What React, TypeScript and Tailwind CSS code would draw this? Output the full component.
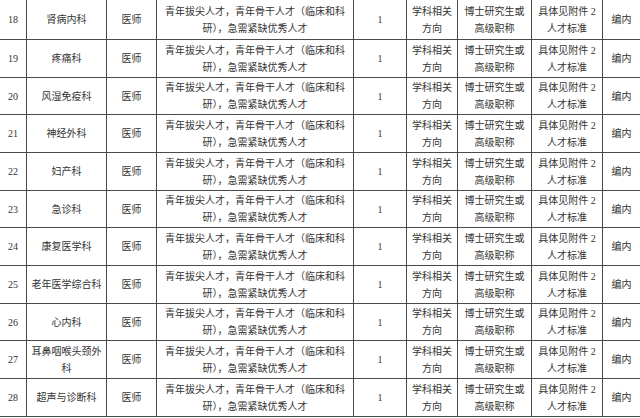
// Recruitment table fragment: rows 18–28, doctor posts per department.

const ROWS: { no: string; dept: React.ReactNode }[] = [
  { no: "18", dept: "肾病内科" },
  { no: "19", dept: "疼痛科" },
  { no: "20", dept: "风湿免疫科" },
  { no: "21", dept: "神经外科" },
  { no: "22", dept: "妇产科" },
  { no: "23", dept: "急诊科" },
  { no: "24", dept: "康复医学科" },
  { no: "25", dept: "老年医学综合科" },
  { no: "26", dept: "心内科" },
  {
    no: "27",
    dept: (
      <>
        耳鼻咽喉头颈外
        <br />科
      </>
    ),
  },
  { no: "28", dept: "超声与诊断科" },
];

// row heights include the 1px bottom rule
const HEIGHTS = [
  "h-[40px]",
  "h-[38px]",
  "h-[37px]",
  "h-[38px]",
  "h-[38px]",
  "h-[37px]",
  "h-[38px]",
  "h-[38px]",
  "h-[37px]",
  "h-[38px]",
  "h-[38px]",
];

const cell =
  "flex shrink-0 items-center justify-center text-center border-r border-[#4a4a4a]";

function Row({ no, dept, h }: { no: string; dept: React.ReactNode; h: string }) {
  return (
    <div className={`flex ${h} border-b border-[#4a4a4a]`}>
      <div className={`${cell} w-[27px]`}>{no}</div>
      <div className={`${cell} w-[80px]`}>{dept}</div>
      <div className={`${cell} w-[50px]`}>医师</div>
      <div className={`${cell} w-[197px]`}>
        <span>
          青年拔尖人才，青年骨干人才（临床和科
          <br />
          研），急需紧缺优秀人才
        </span>
      </div>
      <div className={`${cell} w-[53px]`}>1</div>
      <div className={`${cell} w-[51px]`}>
        <span>
          学科相关
          <br />
          方向
        </span>
      </div>
      <div className={`${cell} w-[74px]`}>
        <span>
          博士研究生或
          <br />
          高级职称
        </span>
      </div>
      <div className={`${cell} w-[71px]`}>
        <span>
          具体见附件 2
          <br />
          人才标准
        </span>
      </div>
      <div className="flex w-[37px] shrink-0 items-center justify-center">
        编内
      </div>
    </div>
  );
}

export default function App() {
  return (
    <div className="h-[418px] w-[640px] overflow-hidden bg-white font-['Liberation_Serif','Noto_Sans_CJK_SC',serif] text-[10px] leading-[17px] text-[#333]">
      {ROWS.map((r, i) => (
        <Row key={r.no} no={r.no} dept={r.dept} h={HEIGHTS[i]} />
      ))}
    </div>
  );
}
